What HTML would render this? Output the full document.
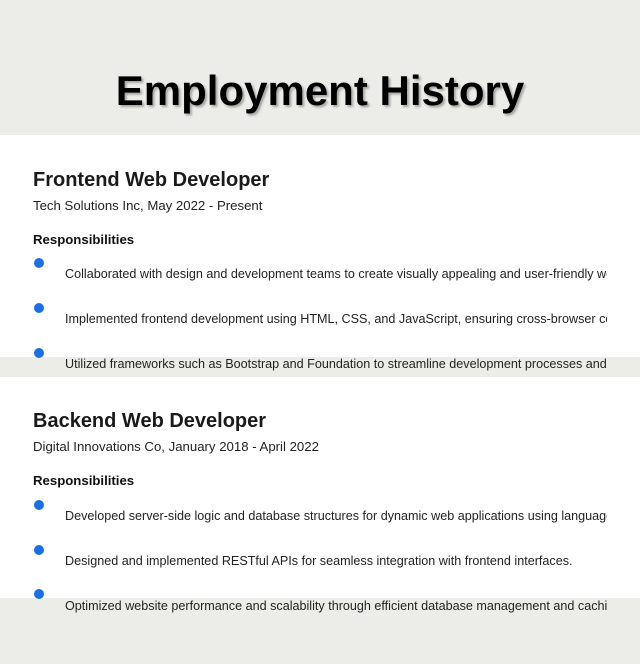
<!DOCTYPE html>
<html><head><style>
html,body{margin:0;width:640px;height:664px;overflow:hidden}
body{background:#ecede9;font-family:"Liberation Sans",Arial,sans-serif;position:relative;color:#222}
.t{position:absolute;white-space:nowrap}
h1{position:absolute;margin:0;left:0;width:640px;text-align:center;top:67px;font-size:42px;font-weight:bold;color:#000;text-shadow:2px 2px 2px rgba(0,0,0,.3)}
.card{position:absolute;left:0;width:640px;background:#fff}
.clip{position:absolute;left:0;width:607px;overflow:hidden;height:664px;top:0}
.h{font-size:20px;font-weight:bold;color:#1a1a1a}
.s{font-size:13.2px;color:#222}
.r{font-size:13.2px;font-weight:bold;color:#111}
.li{font-size:12.6px;color:#222}
.d{position:absolute;width:10px;height:10px;border-radius:50%;background:#1a6fe6}
</style></head><body>
<h1>Employment History</h1>
<div class="card" style="top:135px;height:222px"></div>
<div class="card" style="top:377px;height:221px"></div>
<div class="clip">
<div class="t h" style="left:33px;top:169px">Frontend Web Developer</div>
<div class="t s" style="left:33px;top:198px">Tech Solutions Inc, May 2022 - Present</div>
<div class="t r" style="left:33px;top:232px">Responsibilities</div>
<div class="d" style="left:34px;top:258px"></div>
<div class="t li" style="left:65px;top:267px">Collaborated with design and development teams to create visually appealing and user-friendly websites.</div>
<div class="d" style="left:34px;top:303px"></div>
<div class="t li" style="left:65px;top:312px">Implemented frontend development using HTML, CSS, and JavaScript, ensuring cross-browser compatibility.</div>
<div class="d" style="left:34px;top:348px"></div>
<div class="t li" style="left:65px;top:357px">Utilized frameworks such as Bootstrap and Foundation to streamline development processes and improve efficiency.</div>

<div class="t h" style="left:33px;top:410px">Backend Web Developer</div>
<div class="t s" style="left:33px;top:439px">Digital Innovations Co, January 2018 - April 2022</div>
<div class="t r" style="left:33px;top:473px">Responsibilities</div>
<div class="d" style="left:34px;top:500px"></div>
<div class="t li" style="left:65px;top:509px">Developed server-side logic and database structures for dynamic web applications using languages like PHP.</div>
<div class="d" style="left:34px;top:545px"></div>
<div class="t li" style="left:65px;top:554px">Designed and implemented RESTful APIs for seamless integration with frontend interfaces.</div>
<div class="d" style="left:34px;top:589px"></div>
<div class="t li" style="left:65px;top:599px">Optimized website performance and scalability through efficient database management and caching strategies.</div>
</div>
</body></html>
